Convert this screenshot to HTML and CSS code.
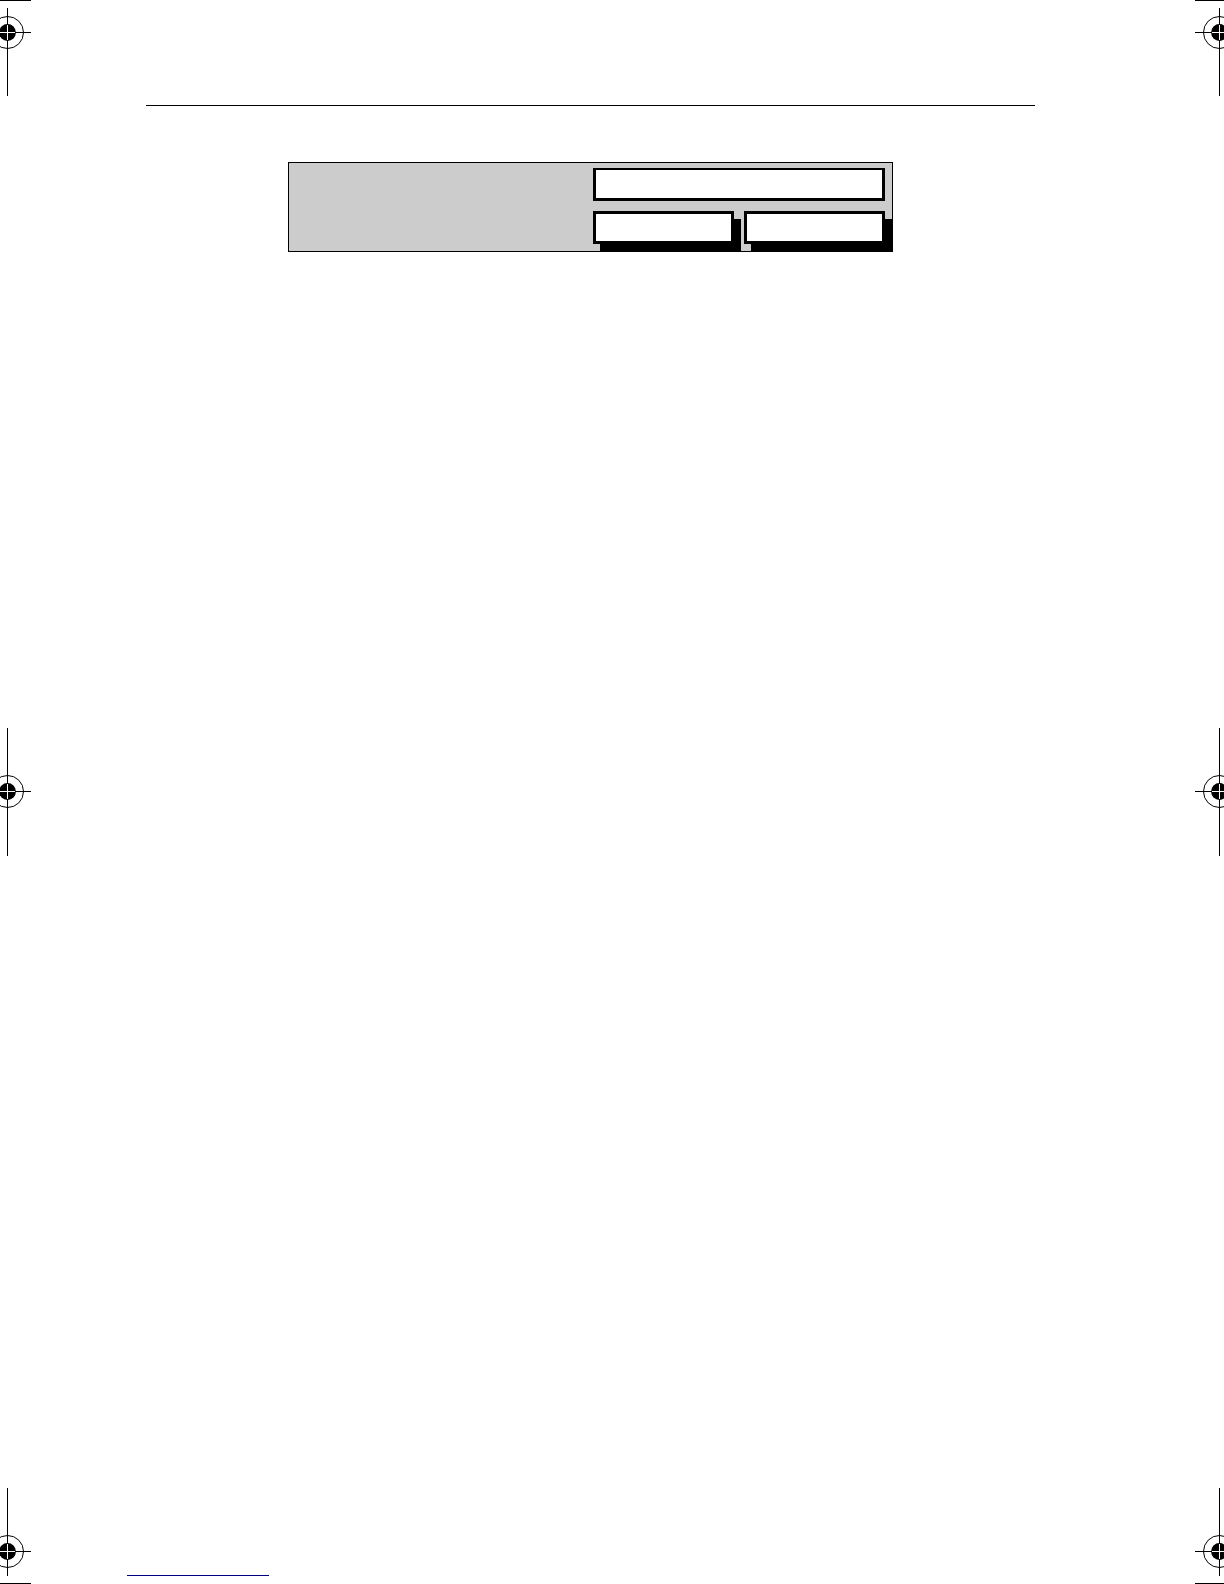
FILE: index.html
```
<!DOCTYPE html>
<html lang="en">
<head>
  <meta charset="UTF-8">
  <meta name="viewport" content="width=device-width, initial-scale=1.0">
  <title>Page</title>
  <link rel="stylesheet" href="styles.css">
</head>
<body>
  <!-- Registration target, shared by all six marks -->
  <svg class="defs" aria-hidden="true">
    <defs>
      <g id="target">
        <circle class="ring" cx="0.5" cy="0.5" r="16" />
        <path class="line" d="M-24 0.5H24" />
        <circle class="dot" cx="0.5" cy="0.5" r="8.4" />
        <path class="cross" d="M-7 0.5H8M0.5 -7V8" />
      </g>
    </defs>
  </svg>

  <div class="page">
    <div class="marks" aria-hidden="true">
      <svg width="31" height="96" viewBox="-7 -32 31 96">
        <path class="line" d="M-7 -31.5H24M0.5 -24V64" />
        <use href="#target" />
      </svg>
      <svg width="31" height="128" viewBox="-7 -63 31 128">
        <path class="line" d="M0.5 -63V65" />
        <use href="#target" />
      </svg>
      <svg width="31" height="96" viewBox="-7 -63 31 96">
        <path class="line" d="M0.5 -63V25M-7 32.5H24" />
        <use href="#target" />
      </svg>
    </div>

    <div class="sheet">
      <main class="content">
        <hr class="rule">
        <form class="panel">
          <div class="controls">
            <input class="box field" type="text" aria-label="Value">
            <div class="buttons">
              <button class="box button" type="button" aria-label="Previous"></button>
              <button class="box button" type="button" aria-label="Next"></button>
            </div>
          </div>
        </form>
      </main>
      <footer class="footer">
        <a class="footer-link" href="#" aria-label="Contents"></a>
      </footer>
    </div>

    <div class="marks" aria-hidden="true">
      <svg width="29" height="96" viewBox="-24 -32 29 96">
        <path class="line" d="M-24 -31.5H5M0.5 -24V64" />
        <use href="#target" />
      </svg>
      <svg width="29" height="128" viewBox="-24 -63 29 128">
        <path class="line" d="M0.5 -63V65" />
        <use href="#target" />
      </svg>
      <svg width="29" height="96" viewBox="-24 -63 29 96">
        <path class="line" d="M0.5 -63V25M-24 32.5H5" />
        <use href="#target" />
      </svg>
    </div>
  </div>
</body>
</html>
```

FILE: styles.css
```
* {
  box-sizing: border-box;
}
body {
  margin: 0;
  background: #fff;
  font-family: "Liberation Sans", Arial, sans-serif;
}

/* Page frame: marks on both edges, sheet in between */
.page {
  display: grid;
  grid-template-columns: 31px 1fr 29px;
  min-height: 100vh;
}
.sheet {
  display: flex;
  flex-direction: column;
}
.content {
  padding: 105px 160px 0 115px;
}

/* Printer's marks */
.defs {
  display: none;
}
.marks {
  display: flex;
  flex-direction: column;
  justify-content: space-between;
}
.marks svg {
  display: block;
}
.ring {
  fill: none;
  stroke: #000;
}
.line {
  stroke: #000;
  shape-rendering: crispEdges;
}
.dot {
  fill: #000;
}
.cross {
  stroke: #fff;
  shape-rendering: crispEdges;
}

/* Panel */
.rule {
  margin: 0;
  border: 0;
  border-top: 1px solid #000;
}
.panel {
  display: grid;
  grid-template-columns: 1fr 292px;
  margin: 56px 142px 0;
  padding: 5px 7px 7px 0;
  border: 1px solid #000;
  background: #ccc;
}
.controls {
  display: flex;
  flex-direction: column;
  grid-column: 2;
  gap: 10px;
}
.box {
  height: 33px;
  margin: 0;
  padding: 0 8px;
  border: 3px solid #000;
  border-radius: 0;
  background: #fff;
  font: inherit;
}
.field {
  width: 100%;
  border-top-width: 2px;
}
.buttons {
  display: flex;
  gap: 10px;
}
.button {
  flex: 1;
  box-shadow: 7px 8px 0 #000;
}

/* Footer */
.footer {
  margin-top: auto;
  padding: 0 0 8px 96px;
}
.footer-link {
  display: block;
  width: 142px;
  height: 20px;
  border-bottom: 1px solid #000080;
}
```
